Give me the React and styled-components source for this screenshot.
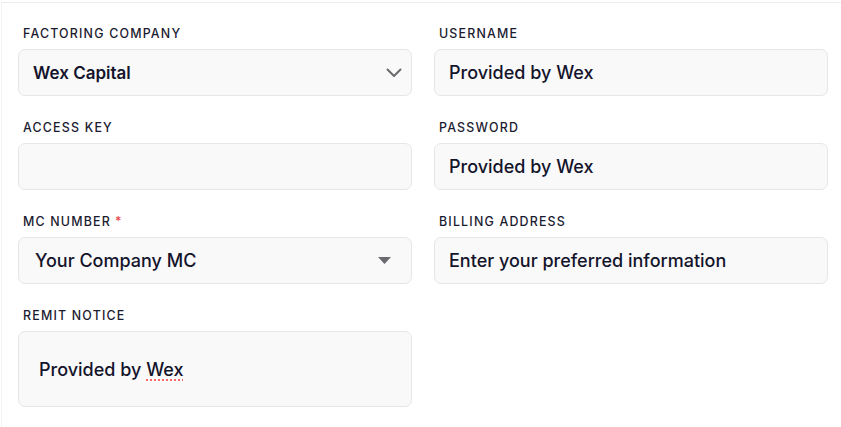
import React from "react";
import styled, { createGlobalStyle } from "styled-components";

const Global = createGlobalStyle`
  html, body { margin: 0; padding: 0; background: #ffffff; }
  body { font-family: Inter, "Noto Sans", sans-serif; -webkit-font-smoothing: antialiased; }
  * { box-sizing: border-box; }
`;

const Panel = styled.div`
  margin-top: 2px;
  margin-left: 1px;
  border-top: 1px solid #ececee;
  border-left: 1px solid #f1f1f3;
  padding: 23px 12px 20px 16px;
  min-height: 425px;
`;

const Grid = styled.div`
  display: grid;
  grid-template-columns: 394px 394px;
  column-gap: 22px;
  row-gap: 24px;
  align-items: start;
`;

const Field = styled.div`
  display: flex;
  flex-direction: column;
  gap: 7px;
`;

const Label = styled.label`
  display: block;
  height: 16px;
  line-height: 16px;
  padding-left: 5px;
  font-size: 12.4px;
  font-weight: 500;
  letter-spacing: 1.2px;
  color: #1b1b30;
  text-transform: uppercase;
`;

const Required = styled.span`
  color: #e5484d;
  margin-left: 4px;
`;

const Box = styled.div`
  height: ${(p) => p.$h || 47}px;
  display: flex;
  align-items: center;
  justify-content: space-between;
  padding: 0 ${(p) => p.$pr || 16}px 0 ${(p) => p.$pl || 14}px;
  background: #f9f9fa;
  border: 1px solid #e6e6ea;
  border-radius: 7px;
  color: #14142b;
  font-size: ${(p) => p.$fs || 18}px;
  font-weight: ${(p) => p.$fw || 500};
`;

const Misspelled = styled.span`
  text-decoration: underline dotted #f26b6b;
  text-decoration-thickness: 2px;
  text-underline-offset: 4px;
`;

const Chevron = () => (
  <svg width="16" height="10" viewBox="0 0 16 10" fill="none">
    <path d="M1.5 1.5 L8 8 L14.5 1.5" stroke="#6b6b6f" strokeWidth="2" strokeLinecap="round" strokeLinejoin="round" />
  </svg>
);

const Caret = () => (
  <svg width="13" height="7" viewBox="0 0 13 7">
    <path d="M0 0 H13 L6.5 7 Z" fill="#6b6b6f" />
  </svg>
);

export default function App() {
  return (
    <>
      <Global />
      <Panel>
        <Grid>
          <Field>
            <Label>Factoring Company</Label>
            <Box $fs={17} $fw={600} $pr={9} $pl={14}>
              <span>Wex Capital</span>
              <Chevron />
            </Box>
          </Field>
          <Field>
            <Label>Username</Label>
            <Box>Provided by Wex</Box>
          </Field>
          <Field>
            <Label>Access Key</Label>
            <Box />
          </Field>
          <Field>
            <Label>Password</Label>
            <Box>Provided by Wex</Box>
          </Field>
          <Field>
            <Label>
              MC Number<Required>*</Required>
            </Label>
            <Box $pl={16} $pr={20}>
              <span>Your Company MC</span>
              <Caret />
            </Box>
          </Field>
          <Field>
            <Label>Billing Address</Label>
            <Box>Enter your preferred information</Box>
          </Field>
          <Field>
            <Label>Remit Notice</Label>
            <Box $h={76} $pl={20}>
              <span>
                Provided by <Misspelled>Wex</Misspelled>
              </span>
            </Box>
          </Field>
        </Grid>
      </Panel>
    </>
  );
}
